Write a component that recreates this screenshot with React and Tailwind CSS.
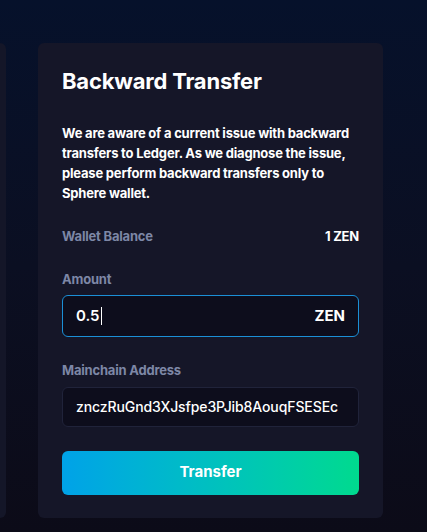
export default function App() {
  return (
    <div className="h-[532px] w-[427px] overflow-hidden bg-gradient-to-b from-[#06112b] via-[#0b0f22] to-[#0c0b18] font-['Inter',sans-serif]">
      <div className="flex items-start gap-8 pt-[43px]">
        <div className="h-[475px] w-[6px] shrink-0 rounded-r-md bg-[#141628]" />
        <div className="flex w-[345px] shrink-0 flex-col rounded-md bg-[#151628] px-6 pt-[24px] pb-[23px]">
          <h2 className="text-[22px] leading-7 font-bold tracking-[-0.2px] text-white">Backward Transfer</h2>

          <p className="mt-[28px] text-[13px] leading-5 font-bold tracking-[-0.2px] text-white">
            We are aware of a current issue with backward transfers to Ledger. As we diagnose the issue, please perform backward transfers only to Sphere wallet.
          </p>

          <div className="mt-[24px] flex items-center justify-between text-[13px] font-bold tracking-[-0.2px]">
            <span className="text-[#7d87a6]">Wallet Balance</span>
            <span className="text-white">1 ZEN</span>
          </div>

          <label className="mt-[23px] block text-[13px] font-bold tracking-[-0.2px] text-[#7d87a6]">Amount</label>
          <div className="mt-[6px] flex h-[42px] shrink-0 items-center justify-between rounded-md border border-[#1b8fd6] bg-[#0d0d1c] px-[13px]">
            <span className="flex items-center text-[15px] font-semibold text-white">
              0.5<span className="ml-[1px] inline-block h-[18px] w-px bg-white" />
            </span>
            <span className="text-[15px] font-bold text-white">ZEN</span>
          </div>

          <label className="mt-[24px] block text-[13px] font-bold tracking-[-0.2px] text-[#7d87a6]">Mainchain Address</label>
          <div className="mt-[6px] flex h-[40px] shrink-0 items-center overflow-hidden rounded-md border border-[#20233a] bg-[#0d0d1c] pl-[13px] pr-[14px]">
            <span className="overflow-hidden whitespace-nowrap text-[14px] font-medium tracking-[-0.1px] text-white">
              znczRuGnd3XJsfpe3PJib8AouqFSESEc
            </span>
          </div>

          <button className="mt-[24px] h-[44px] w-full shrink-0 rounded-md bg-gradient-to-r from-[#00a2e8] to-[#00da8e] text-[15px] font-bold text-white">
            Transfer
          </button>
        </div>
      </div>
    </div>
  )
}
